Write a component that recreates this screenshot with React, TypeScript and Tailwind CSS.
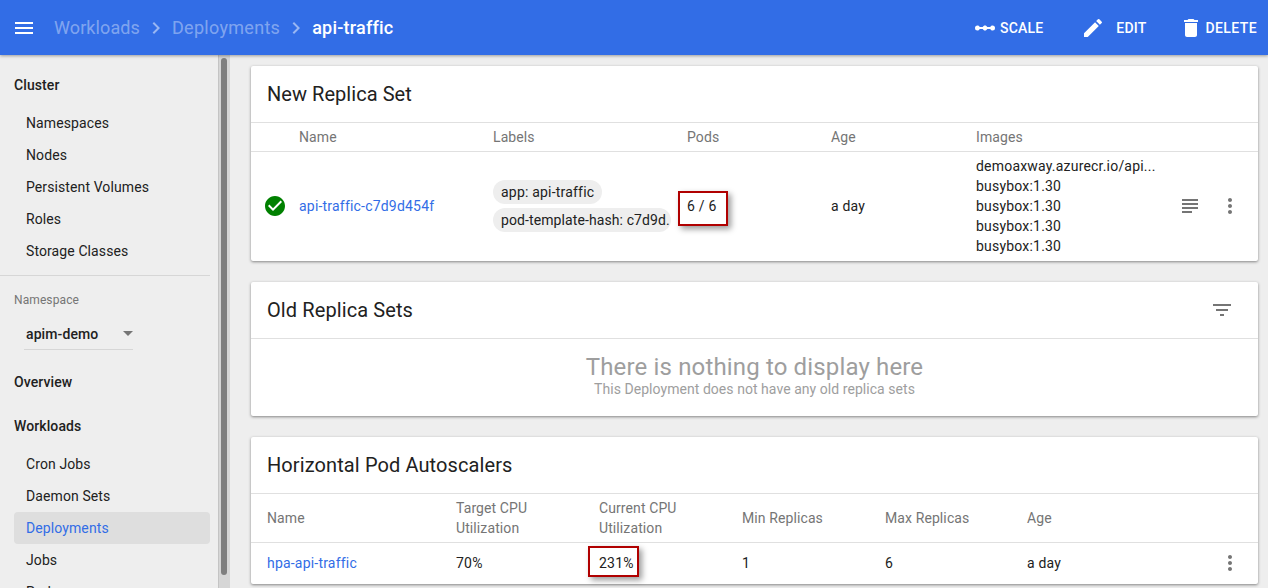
import type { ReactNode } from 'react';
import { MdMenu, MdChevronRight, MdEdit, MdDelete, MdCheckCircle, MdSubject, MdMoreVert, MdFilterList, MdLinearScale } from 'react-icons/md';

const clusterLinks = ['Namespaces', 'Nodes', 'Persistent Volumes', 'Roles', 'Storage Classes'];
const workloadLinks = ['Cron Jobs', 'Daemon Sets', 'Deployments', 'Jobs', 'Pods'];
const images = ['demoaxway.azurecr.io/api...', 'busybox:1.30', 'busybox:1.30', 'busybox:1.30', 'busybox:1.30'];

const SideLink = ({ label, active }: { label: string; active?: boolean }) => (
    <div className={`h-8 shrink-0 flex items-center pl-3 rounded-sm text-sm ${active ? 'bg-[#dedede] text-[#326de6]' : 'text-[#212121]'}`}>
        {label}
    </div>
);

const Sidebar = () => (
    <div className="w-[218px] shrink-0 bg-[#eeeeee] overflow-hidden flex flex-col pl-[14px] pr-2 pt-[14px] tracking-[0.1px]">
        <div className="h-8 shrink-0 flex items-center text-sm font-medium text-[#212121]">Cluster</div>
        <div className="flex flex-col mt-[6px]">
            {clusterLinks.map(l => <SideLink key={l} label={l} />)}
        </div>
        <div className="-ml-[14px] border-b border-[#d6d6d6] mt-2 h-0" />
        <div className="text-xs text-[#757575] mt-[16px] leading-4">Namespace</div>
        <div className="ml-[10px] w-[109px] h-8 mt-[10px] shrink-0 flex items-center justify-between border-b border-[#d6d6d6] text-sm font-medium text-[#212121]">
            <span className="ml-[2px]">apim-demo</span>
            <span className="w-0 h-0 border-x-[5px] border-x-transparent border-t-[5px] border-t-[#757575]" />
        </div>
        <div className="h-8 shrink-0 flex items-center text-sm font-medium text-[#212121] mt-4">Overview</div>
        <div className="h-8 shrink-0 flex items-center text-sm font-medium text-[#212121] mt-3">Workloads</div>
        <div className="flex flex-col mt-[6px]">
            {workloadLinks.map(l => <SideLink key={l} label={l} active={l === 'Deployments'} />)}
        </div>
    </div>
);

const Flagged = ({ children, className }: { children: string; className: string }) => (
    <div className="relative">
        {children}
        {/* Red marker drawn over the screenshot */}
        <div className={`absolute border-2 border-[#b00000] shadow-[3px_3px_6px_rgba(0,0,0,0.4)] ${className}`} />
    </div>
);

const Card = ({ children }: { children: ReactNode }) => (
    <div className="bg-white shadow-[0_1px_3px_rgba(0,0,0,0.45)] rounded-[2px] shrink-0">{children}</div>
);

const App = () => {
    return (
        <div className="w-[1268px] h-[588px] overflow-hidden flex flex-col bg-[#eeeeee] font-['Roboto',sans-serif] tracking-[0.2px]">
            {/* Toolbar */}
            <div className="h-[55px] shrink-0 bg-[#326de6] text-white flex items-center pl-[12px] pr-[11px] shadow-[0_1px_3px_rgba(0,0,0,0.35)] relative z-10">
                <MdMenu size={24} />
                <span className="ml-[18px] text-lg text-white/40 tracking-[0.1px]">Workloads</span>
                <MdChevronRight size={24} className="text-white/50 ml-1" />
                <span className="ml-1 text-lg text-white/40 tracking-[0.3px]">Deployments</span>
                <MdChevronRight size={24} className="text-white/50 ml-1" />
                <span className="ml-1 text-lg font-medium tracking-[0.2px]">api-traffic</span>
                <div className="ml-auto flex items-center text-sm font-medium">
                    <MdLinearScale size={24} />
                    <span className="ml-[3px]">SCALE</span>
                    <MdEdit size={24} className="ml-[38px]" />
                    <span className="ml-[11px]">EDIT</span>
                    <MdDelete size={24} className="ml-[32px]" />
                    <span className="ml-[3px] tracking-[0.4px]">DELETE</span>
                </div>
            </div>

            <div className="flex flex-1 min-h-0">
                <Sidebar />
                {/* Scrollbar */}
                <div className="w-[12px] shrink-0 bg-[#d6d6d6] border-l border-[#c4c4c4] flex justify-center pr-[1px]">
                    <div className="w-[6px] h-[517px] mt-[3px] rounded-full bg-[#7f7f7f]" />
                </div>

                <div className="flex-1 min-w-0 flex flex-col gap-[21px] pt-[11px] pl-[21px] pr-[10px]">
                    {/* New Replica Set */}
                    <Card>
                        <div className="h-[57px] flex items-center px-4 text-xl text-[#212121] border-b border-[#e0e0e0] tracking-[0.05px]">New Replica Set</div>
                        <div className="grid grid-cols-[48px_194px_194px_144px_145px_1fr] h-[29px] items-center text-sm text-[#757575] border-b border-[#e0e0e0] tracking-[0.1px]">
                            <div />
                            <div>Name</div>
                            <div>Labels</div>
                            <div>Pods</div>
                            <div>Age</div>
                            <div>Images</div>
                        </div>
                        <div className="grid grid-cols-[48px_194px_194px_144px_145px_1fr] h-[109px] pb-[2px] items-center text-sm text-[#212121]">
                            <div className="pl-[12px]"><MdCheckCircle size={24} className="text-[#008000]" /></div>
                            <div className="text-[#326de6]">api-traffic-c7d9d454f</div>
                            <div className="flex flex-col items-start gap-[4px]">
                                <span className="h-6 flex items-center px-2 rounded-xl bg-[#eeeeee]">app: api-traffic</span>
                                <span className="h-6 w-[178px] flex items-center pl-2 rounded-xl bg-[#eeeeee] whitespace-nowrap overflow-hidden tracking-[0.1px]">pod-template-hash: c7d9d.</span>
                            </div>
                            <Flagged className="-left-[9px] -top-[5px] w-[50px] h-[35px]">6 / 6</Flagged>
                            <div>a day</div>
                            <div className="flex items-center">
                                <div className="w-[190px] leading-5">
                                    {images.map((img, i) => <div key={i}>{img}</div>)}
                                </div>
                                <MdSubject size={24} className="text-[#757575] ml-[12px]" />
                                <MdMoreVert size={24} className="text-[#757575] ml-[16px]" />
                            </div>
                        </div>
                    </Card>

                    {/* Old Replica Sets */}
                    <Card>
                        <div className="h-[57px] flex items-center justify-between pl-4 pr-6 text-xl text-[#212121] border-b border-[#e0e0e0] tracking-[0.1px]">
                            Old Replica Sets
                            <MdFilterList size={24} className="text-[#757575]" />
                        </div>
                        <div className="h-[77px] flex flex-col items-center pt-[14px] text-[#9e9e9e]">
                            <div className="text-2xl leading-[28px] tracking-[0.15px]">There is nothing to display here</div>
                            <div className="text-sm leading-4 tracking-[0.05px]">This Deployment does not have any old replica sets</div>
                        </div>
                    </Card>

                    {/* Horizontal Pod Autoscalers */}
                    <Card>
                        <div className="h-[57px] flex items-center px-4 text-xl text-[#212121] border-b border-[#e0e0e0] tracking-[0.1px]">Horizontal Pod Autoscalers</div>
                        <div className="grid grid-cols-[189px_143px_143px_143px_142px_1fr] pl-4 h-[49px] items-center text-sm leading-5 text-[#757575] border-b border-[#e0e0e0] tracking-[0.1px]">
                            <div>Name</div>
                            <div>Target CPU<br />Utilization</div>
                            <div>Current CPU<br />Utilization</div>
                            <div>Min Replicas</div>
                            <div>Max Replicas</div>
                            <div>Age</div>
                        </div>
                        <div className="grid grid-cols-[189px_143px_143px_143px_142px_1fr] pl-4 h-[41px] pb-[2px] items-center text-sm text-[#212121]">
                            <div className="text-[#326de6]">hpa-api-traffic</div>
                            <div>70%</div>
                            <Flagged className="-left-[11px] -top-[7px] w-[51px] h-[31px]">231%</Flagged>
                            <div>1</div>
                            <div>6</div>
                            <div className="flex items-center justify-between pr-4">
                                a day
                                <MdMoreVert size={24} className="text-[#757575]" />
                            </div>
                        </div>
                    </Card>
                </div>
            </div>
        </div>
    );
};

export default App;
